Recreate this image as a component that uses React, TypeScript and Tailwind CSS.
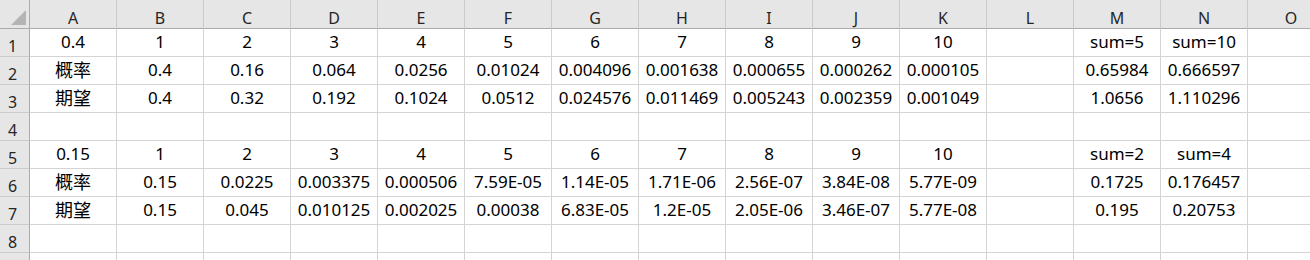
import React from "react";

const cols = ["A", "B", "C", "D", "E", "F", "G", "H", "I", "J", "K", "L", "M", "N", "O"];

const rows: string[][] = [
  ["0.4", "1", "2", "3", "4", "5", "6", "7", "8", "9", "10", "", "sum=5", "sum=10", ""],
  ["概率", "0.4", "0.16", "0.064", "0.0256", "0.01024", "0.004096", "0.001638", "0.000655", "0.000262", "0.000105", "", "0.65984", "0.666597", ""],
  ["期望", "0.4", "0.32", "0.192", "0.1024", "0.0512", "0.024576", "0.011469", "0.005243", "0.002359", "0.001049", "", "1.0656", "1.110296", ""],
  ["", "", "", "", "", "", "", "", "", "", "", "", "", "", ""],
  ["0.15", "1", "2", "3", "4", "5", "6", "7", "8", "9", "10", "", "sum=2", "sum=4", ""],
  ["概率", "0.15", "0.0225", "0.003375", "0.000506", "7.59E-05", "1.14E-05", "1.71E-06", "2.56E-07", "3.84E-08", "5.77E-09", "", "0.1725", "0.176457", ""],
  ["期望", "0.15", "0.045", "0.010125", "0.002025", "0.00038", "6.83E-05", "1.2E-05", "2.05E-06", "3.46E-07", "5.77E-08", "", "0.195", "0.20753", ""],
  ["", "", "", "", "", "", "", "", "", "", "", "", "", "", ""],
  ["", "", "", "", "", "", "", "", "", "", "", "", "", "", ""],
];

export default function App() {
  return (
    <div
      className="w-[1310px] h-[260px] overflow-hidden bg-white text-black"
      style={{ fontFamily: '"Noto Sans", "Noto Sans CJK TC", sans-serif' }}
    >
      <div className="grid grid-cols-[30px_repeat(15,87px)] w-max">
        {/* header */}
        <div className="relative h-[29px] bg-[#e6e6e6] border-r border-b border-[#ababab]">
          <svg className="absolute left-[11px] top-[10px]" width="15" height="15" viewBox="0 0 15 15">
            <polygon points="15,0 15,15 0,15" fill="#b4b4b4" />
          </svg>
        </div>
        {cols.map((c) => (
          <div
            key={c}
            className="h-[29px] bg-[#e6e6e6] border-r border-r-[#cacaca] border-b border-b-[#ababab] text-center text-[16px] leading-[20px] pt-[8px] text-[#262626]"
          >
            {c}
          </div>
        ))}
        {rows.map((r, ri) => (
          <React.Fragment key={ri}>
            <div className="h-[28px] bg-[#e6e6e6] border-r border-r-[#ababab] border-b border-b-[#cacaca] pl-[8px] text-[16px] leading-[20px] pt-[7px] text-[#262626]">
              {ri < 8 ? ri + 1 : ""}
            </div>
            {r.map((v, ci) => (
              <div
                key={ci}
                className={`h-[28px] border-r border-b border-[#d4d4d4] text-center leading-[26px] whitespace-nowrap overflow-hidden ${
                  /[\u4e00-\u9fff]/.test(v) ? "text-[18px]" : "text-[17px]"
                }`}
              >
                {v}
              </div>
            ))}
          </React.Fragment>
        ))}
      </div>
    </div>
  );
}
